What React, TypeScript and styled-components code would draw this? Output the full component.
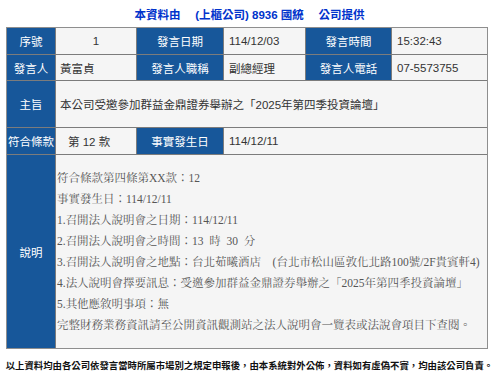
import styled, { createGlobalStyle } from "styled-components";

const GlobalStyle = createGlobalStyle`
  html, body {
    margin: 0;
    padding: 0;
    background: #ffffff;
  }
  body {
    font-family: "Liberation Sans", "Noto Sans CJK TC", sans-serif;
  }
`;

const Page = styled.div`
  width: 499px;
  height: 388px;
  box-sizing: border-box;
  overflow: hidden;
`;

const Title = styled.h2`
  margin: 0 0 5px 0;
  padding-top: 8px;
  line-height: 14px;
  font-size: 11.5px;
  font-weight: bold;
  color: #0033cc;
  text-align: center;
  white-space: pre;
`;

const Board = styled.div`
  display: grid;
  grid-template-columns: 48px 80px 86px 81px 85px 95px;
  grid-template-rows: 26px 25px 46px 26px 193px;
  gap: 1px;
  width: fit-content;
  margin-left: 6px;
  background: #7c7c7c;
  border: 1px solid #8e8e8e;
  font-size: 11.5px;
`;

const Label = styled.div`
  display: flex;
  align-items: center;
  justify-content: center;
  background: #17579a;
  color: #ffffff;
  white-space: nowrap;
`;

const Value = styled.div<{ $align?: "left" | "center"; $span?: number; $pad?: number }>`
  display: flex;
  align-items: center;
  justify-content: ${(p) => (p.$align === "center" ? "center" : "flex-start")};
  padding-left: ${(p) => (p.$align === "center" ? 0 : p.$pad ?? 5)}px;
  grid-column: span ${(p) => p.$span ?? 1};
  background: #f5f5f5;
  color: #333333;
  white-space: nowrap;
`;

const Note = styled.div`
  grid-column: span 5;
  display: flex;
  flex-direction: column;
  justify-content: center;
  padding-left: 1px;
  background: #f5f5f5;
  color: #555555;
  font-family: "Liberation Serif", "Noto Serif CJK TC", "Noto Sans CJK TC", serif;
  font-size: 11.5px;
`;

const NoteLine = styled.div`
  line-height: 21px;
  white-space: nowrap;
`;

const Footer = styled.p`
  margin: 11px 0 0 0;
  font-size: 9.4px;
  line-height: 12px;
  font-weight: bold;
  color: #111111;
  text-align: center;
  white-space: nowrap;
`;

const notes = [
  "符合條款第四條第XX款：12",
  "事實發生日：114/12/11",
  "1.召開法人說明會之日期：114/12/11",
  "2.召開法人說明會之時間：13\u2002時\u200230\u2002分",
  "3.召開法人說明會之地點：台北茹曦酒店\u3000(台北市松山區敦化北路100號/2F貴賓軒4)",
  "4.法人說明會擇要訊息：受邀參加群益金鼎證券舉辦之「2025年第四季投資論壇」",
  "5.其他應敘明事項：無",
  "完整財務業務資訊請至公開資訊觀測站之法人說明會一覽表或法說會項目下查閱。",
];

export default function App() {
  return (
    <Page>
      <GlobalStyle />
      <Title>{"本資料由\u3000 (上櫃公司) 8936 國統\u3000 公司提供"}</Title>
      <Board>
        <Label>序號</Label>
        <Value $align="center">1</Value>
        <Label>發言日期</Label>
        <Value>114/12/03</Value>
        <Label>發言時間</Label>
        <Value>15:32:43</Value>

        <Label>發言人</Label>
        <Value $pad={4}>黃富貞</Value>
        <Label>發言人職稱</Label>
        <Value>副總經理</Value>
        <Label>發言人電話</Label>
        <Value>07-5573755</Value>

        <Label>主旨</Label>
        <Value $span={5} $pad={4}>
          本公司受邀參加群益金鼎證券舉辦之「2025年第四季投資論壇」
        </Value>

        <Label>符合條款</Label>
        <Value $pad={12}>第 12 款</Value>
        <Label>事實發生日</Label>
        <Value $span={3}>114/12/11</Value>

        <Label>說明</Label>
        <Note>
          {notes.map((line, i) => (
            <NoteLine key={i}>{line}</NoteLine>
          ))}
        </Note>
      </Board>
      <Footer>
        以上資料均由各公司依發言當時所屬市場別之規定申報後，由本系統對外公佈，資料如有虛偽不實，均由該公司負責。
      </Footer>
    </Page>
  );
}
